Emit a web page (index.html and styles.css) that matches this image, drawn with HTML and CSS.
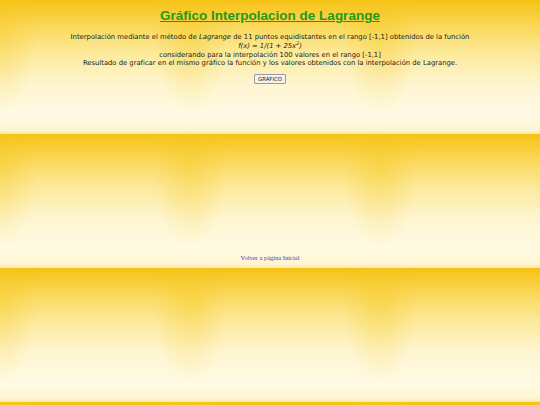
FILE: index.html
```html
<!DOCTYPE html>
<html lang="es">
<head>
<meta charset="utf-8" />
<title>Gráfico Interpolacion de Lagrange</title>
<link rel="stylesheet" href="styles.css">
</head>

<body>

<h1 class="titulo">Gráfico Interpolacion de Lagrange</h1>

<p class="descripcion">
    Interpolación mediante el método de <em>Lagrange</em> de 11 puntos equidistantes en el rango [-1,1] obtenidos de la función<br />
    <em class="formula">f(x) = 1/(1 + 25x<sup>2</sup>)</em><br />
    considerando para la interpolación 100 valores en el rango [-1,1]<br />
    Resultado de graficar en el mismo gráfico la función y los valores obtenidos con la interpolación de Lagrange.
</p>

<form class="acciones" action="#">
    <button type="button" class="boton">GRÁFICO</button>
</form>

<div class="grafico"></div>

<p class="volver"><a href="#">Volver a página Inicial</a></p>

</body>
</html>
```

FILE: styles.css
```css
html {
    min-height: 100%;
    background-color: #fdf0b0;
    /* tile: yellow top edge, soft yellow sides, pale cream centre */
    background-image:
        radial-gradient(ellipse 38px 85px at 0 22%, rgba(246, 200, 30, 0.4), rgba(246, 200, 30, 0)),
        radial-gradient(ellipse 38px 85px at 100% 22%, rgba(246, 200, 30, 0.4), rgba(246, 200, 30, 0)),
        linear-gradient(to bottom, #f5c214 0%, #f7c92a 6%, #fad95c 20%, #fcea9c 40%, #fef5cf 62%, #fffae4 85%, #fef6d2 97%, #fce9a0 100%);
    background-size: 190px 134px;
}

body {
    margin: 0;
    padding-top: 7px;
    text-align: center;
    color: #1a1a1a;
}

h1.titulo {
    margin: 0;
    font-family: "Liberation Sans", Arial, sans-serif;
    font-size: 13.5px;
    line-height: 18px;
    color: #1f9a1c;
    text-decoration: underline;
}

p.descripcion {
    margin: 8px 0 0;
    font-family: "DejaVu Sans", Verdana, sans-serif;
    font-size: 6.8px;
    line-height: 8.8px;
}

p.descripcion sup {
    font-size: 4.8px;
    line-height: 0;
}

form.acciones {
    margin: 0;
}

button.boton {
    display: block;
    margin: 6px auto 0;
    font-family: "DejaVu Sans", Verdana, sans-serif;
    font-size: 5.4px;
    line-height: 8px;
    padding: 0 3px;
    color: #222;
    background: #f2f2f2;
    border: 1px solid #9a9a9a;
    border-radius: 1px;
}

div.grafico {
    height: 170px;
}

p.volver {
    margin: 0;
    font-family: "Liberation Serif", "Times New Roman", serif;
    font-size: 6.5px;
}

p.volver a {
    color: #3d3dc0;
}
```
